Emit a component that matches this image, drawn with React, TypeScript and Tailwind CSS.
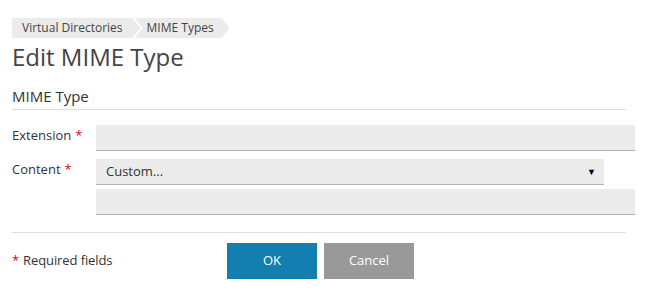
import { useState } from "react";

const crumbFirst = "[clip-path:polygon(0_0,calc(100%-8px)_0,100%_50%,calc(100%-8px)_100%,0_100%)]";
const crumbNext = "[clip-path:polygon(0_0,calc(100%-8px)_0,100%_50%,calc(100%-8px)_100%,0_100%,8px_50%)]";

const Req = () => <span className="text-[#d0021b] ml-1">*</span>;

const App = () => {
  const [ext, setExt] = useState("");
  const [custom, setCustom] = useState("");

  return (
    <div className="w-[656px] h-[296px] bg-white font-['Open_Sans',sans-serif] text-[#333] px-3 pt-[18px]">
      <nav className="flex h-5 text-[12px] text-[#444]">
        <div className={`bg-[#ebebeb] h-5 flex items-center pl-[10px] pr-[18px] ${crumbFirst}`}>Virtual Directories</div>
        <div className={`bg-[#ebebeb] h-5 flex items-center pl-[12px] pr-[16px] -ml-[6px] ${crumbNext}`}>MIME Types</div>
      </nav>
      <h1 className="text-[24px] leading-8 text-[#444] mt-[3px]">Edit MIME Type</h1>
      <h2 className="text-[15px] leading-5 text-[#333] mt-[13px] pb-[3px] border-b border-[#dcdcdc] w-[614px]">MIME Type</h2>

      <div className="mt-[15px] flex flex-col gap-2 text-[13px]">
        <div className="flex">
          <label className="w-[84px] pt-[1px]">Extension<Req /></label>
          <input
            value={ext}
            onChange={(e) => setExt(e.target.value)}
            className="w-[539px] h-[26px] bg-[#ebebeb] border-b border-[#a9b5c0] outline-none px-2"
          />
        </div>
        <div className="flex">
          <label className="w-[84px] pt-[1px]">Content<Req /></label>
          <div className="flex flex-col gap-1">
            <div className="w-[508px] h-[26px] bg-[#ebebeb] border-b border-[#a9b5c0] flex items-center justify-between pl-[10px] pr-[8px]">
              <span>Custom...</span>
              <span className="text-[9px] text-black">▼</span>
            </div>
            <input
              value={custom}
              onChange={(e) => setCustom(e.target.value)}
              className="w-[539px] h-[26px] bg-[#ebebeb] border-b border-[#a9b5c0] outline-none px-2"
            />
          </div>
        </div>
      </div>

      <div className="mt-[17px] border-t border-[#dcdcdc] w-[614px] pt-[10px] flex items-center text-[13px]">
        <div className="w-[215px] tracking-[-0.1px]"><span className="text-[#d0021b] mr-1">*</span>Required fields</div>
        <button className="w-[90px] h-9 bg-[#137fb0] text-white">OK</button>
        <button className="w-[90px] h-9 bg-[#999999] text-white ml-[7px]">Cancel</button>
      </div>
    </div>
  );
};

export default App;
